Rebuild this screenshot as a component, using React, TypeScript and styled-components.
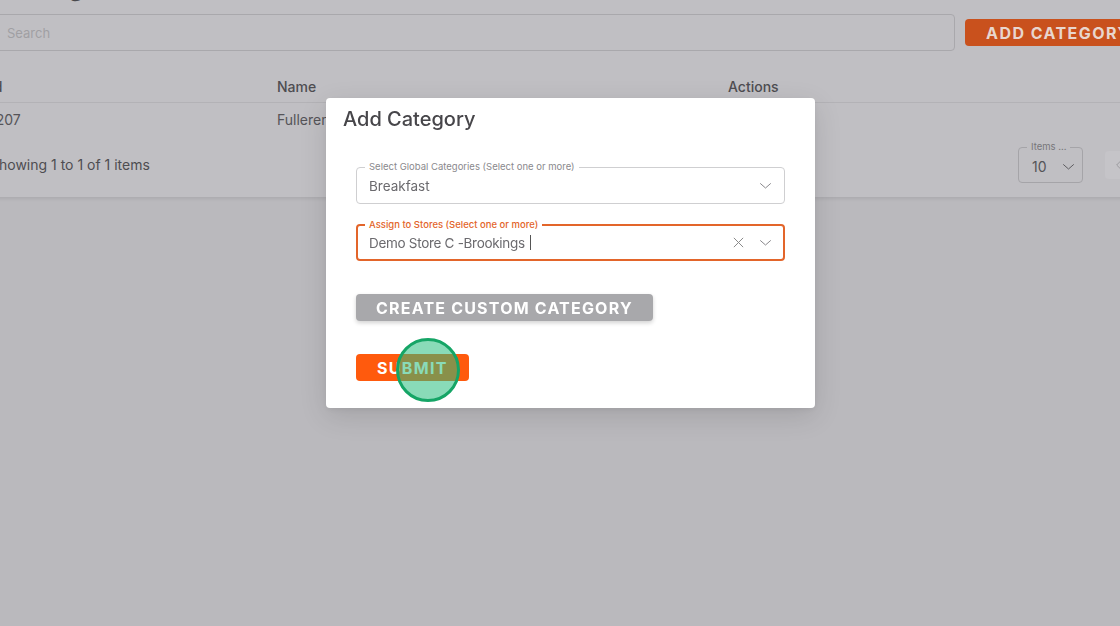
import styled, { createGlobalStyle } from "styled-components"

const GlobalStyle = createGlobalStyle`
  html, body {
    margin: 0;
    padding: 0;
    width: 1120px;
    height: 626px;
    overflow: hidden;
    background: #bab9bd;
    font-family: Inter, "Noto Sans", sans-serif;
  }
`

const Chevron = ({ color = "#8a898d", size = 15 }: { color?: string; size?: number }) => (
  <svg width={size} height={size} viewBox="0 0 24 24" fill="none" stroke={color} strokeWidth="1.6" strokeLinecap="round" strokeLinejoin="round">
    <path d="M4 9l8 7 8-7" />
  </svg>
)

const Cross = () => (
  <svg width="15" height="15" viewBox="0 0 24 24" fill="none" stroke="#8a8a8a" strokeWidth="1.6" strokeLinecap="round">
    <path d="M5 5l14 14M19 5L5 19" />
  </svg>
)

export default function App() {
  return (
    <>
      <GlobalStyle />
      <Page>
        <Paper>
          <Title>Categories</Title>
          <Toolbar>
            <Search placeholder="Search" />
            <OrangeButton $dim>ADD CATEGORY</OrangeButton>
          </Toolbar>
          <Table>
            <HeadCell>Id</HeadCell>
            <HeadCell>Name</HeadCell>
            <HeadCell>Actions</HeadCell>
            <Cell>1207</Cell>
            <Cell>Fullerenes</Cell>
            <Cell />
          </Table>
          <Footer>
            <span>Showing 1 to 1 of 1 items</span>
            <Pager>
              <ItemsSelect>
                <SmallLegend>Items ...</SmallLegend>
                <span>10</span>
                <Chevron color="#5e5d61" size={15} />
              </ItemsSelect>
              <PrevButton>
                <svg width="14" height="14" viewBox="0 0 24 24" fill="none" stroke="#99989c" strokeWidth="1.6" strokeLinecap="round">
                  <path d="M15 5l-7 7 7 7" />
                </svg>
              </PrevButton>
            </Pager>
          </Footer>
        </Paper>
      </Page>

      <Dialog>
        <DialogTitle>Add Category</DialogTitle>
        <Form>
          <Field>
            <Legend>Select Global Categories (Select one or more)</Legend>
            <Value>Breakfast</Value>
            <Icons>
              <Chevron />
            </Icons>
          </Field>
          <Field $focused>
            <Legend $focused>Assign to Stores (Select one or more)</Legend>
            <Value $tight>
              Demo Store C -Brookings <Caret />
            </Value>
            <Icons>
              <Cross />
              <Chevron />
            </Icons>
          </Field>
          <GreyButton>CREATE CUSTOM CATEGORY</GreyButton>
          <SubmitRow>
            <OrangeButton>SUBMIT</OrangeButton>
            <ClickMark />
          </SubmitRow>
        </Form>
      </Dialog>
    </>
  )
}

const Page = styled.div`
  margin: -46px 0 0 -34px;
  width: 1200px;
`

const Paper = styled.div`
  background: #c0bfc3;
  padding: 4px 24px 4px 24px;
  box-shadow: 0 2px 3px rgba(0, 0, 0, 0.08);
  color: #504f53;
`

const Title = styled.h1`
  margin: 0;
  height: 47px;
  padding: 9px 0 0 20px;
  font-size: 26px;
  font-weight: 500;
  line-height: 40px;
  color: #4a494d;
`

const Toolbar = styled.div`
  display: flex;
  align-items: center;
  gap: 10px;
`

const Search = styled.input`
  flex-shrink: 0;
  width: 965px;
  box-sizing: border-box;
  height: 37px;
  border: 1px solid #a9a8ac;
  border-radius: 4px;
  background: transparent;
  padding: 0 0 0 16px;
  font-family: inherit;
  font-size: 13px;
  outline: none;
  &::placeholder {
    color: #a09fa3;
  }
`

const OrangeButton = styled.button<{ $dim?: boolean }>`
  flex-shrink: 0;
  height: 27px;
  border: none;
  border-radius: 4px;
  padding: 0 21px;
  background: ${(p) => (p.$dim ? "#c9511d" : "#ff5a0d")};
  color: ${(p) => (p.$dim ? "#e8d6ce" : "#ffffff")};
  font-family: inherit;
  font-size: 16px;
  font-weight: 700;
  letter-spacing: ${(p) => (p.$dim ? "1.45px" : "1.3px")};
  white-space: nowrap;
  cursor: pointer;
`

const Table = styled.div`
  display: grid;
  grid-template-columns: 287px 451px 1fr;
  margin-top: 19px;
  font-size: 14px;
`

const HeadCell = styled.div`
  height: 33px;
  box-sizing: border-box;
  padding-top: 1px;
  display: flex;
  align-items: center;
  font-weight: 500;
  color: #4e4d51;
  border-bottom: 1px solid #b3b2b6;
`

const Cell = styled.div`
  height: 33px;
  display: flex;
  align-items: center;
  color: #555458;
`

const Footer = styled.div`
  display: flex;
  align-items: center;
  justify-content: space-between;
  font-size: 14px;
  color: #4e4d51;
  height: 57px;
`

const Pager = styled.div`
  display: flex;
  align-items: center;
  gap: 22px;
  margin-right: 9px;
`

const ItemsSelect = styled.div`
  position: relative;
  width: 65px;
  height: 36px;
  box-sizing: border-box;
  border: 1px solid #a5a4a8;
  border-radius: 4px;
  display: flex;
  align-items: center;
  gap: 14px;
  padding: 3px 0 0 13px;
  font-size: 14px;
  color: #555458;
`

const SmallLegend = styled.span`
  position: absolute;
  top: -7px;
  left: 8px;
  padding: 0 4px;
  background: #c0bfc3;
  font-size: 9.5px;
  line-height: 12px;
  color: #77767a;
`

const PrevButton = styled.div`
  width: 28px;
  height: 28px;
  border-radius: 4px;
  background: #c5c4c8;
  display: flex;
  align-items: center;
  justify-content: center;
`

const Dialog = styled.div`
  position: fixed;
  left: 326px;
  top: 98px;
  width: 489px;
  box-sizing: border-box;
  background: #ffffff;
  border-radius: 4px;
  box-shadow: 0 8px 28px rgba(0, 0, 0, 0.12), 0 2px 6px rgba(0, 0, 0, 0.06);
  padding: 9px 30px 27px 30px;
`

const DialogTitle = styled.h2`
  margin: 0 0 0 -13px;
  font-size: 20px;
  font-weight: 500;
  line-height: 24px;
  color: #47464a;
`

const Form = styled.div`
  display: flex;
  flex-direction: column;
  align-items: flex-start;
  padding-top: 36px;
`

const Field = styled.div<{ $focused?: boolean }>`
  position: relative;
  width: 429px;
  height: 37px;
  box-sizing: border-box;
  border: ${(p) => (p.$focused ? "2px solid #e3652a" : "1px solid #cfcfd1")};
  border-radius: 4px;
  display: flex;
  align-items: center;
  padding: 0 ${(p) => (p.$focused ? "10px" : "11px")} 0 ${(p) => (p.$focused ? "11px" : "12px")};
  margin-bottom: ${(p) => (p.$focused ? "33px" : "20px")};
`

const Legend = styled.span<{ $focused?: boolean }>`
  position: absolute;
  top: -7px;
  left: ${(p) => (p.$focused ? "7px" : "8px")};
  padding: 0 4px;
  background: #ffffff;
  font-size: 9.5px;
  line-height: 12px;
  font-weight: ${(p) => (p.$focused ? 500 : 400)};
  color: ${(p) => (p.$focused ? "#e3652a" : "#8a898d")};
  white-space: nowrap;
`

const Value = styled.div<{ $tight?: boolean }>`
  flex: 1;
  display: flex;
  align-items: center;
  font-size: 13.5px;
  letter-spacing: ${(p) => (p.$tight ? "-0.3px" : "0")};
  color: #6b6a6e;
  white-space: pre;
`

const Caret = styled.span`
  display: inline-block;
  width: 1px;
  height: 15px;
  margin-left: 2px;
  background: #555;
`

const Icons = styled.div`
  display: flex;
  align-items: center;
  gap: 12px;
`

const GreyButton = styled.button`
  height: 27px;
  border: none;
  border-radius: 4px;
  padding: 0 20px;
  background: #a8a8ab;
  color: #ffffff;
  font-family: inherit;
  font-size: 16px;
  font-weight: 700;
  letter-spacing: 1.2px;
  box-shadow: 0 2px 4px rgba(0, 0, 0, 0.18);
  margin-bottom: 33px;
`

const SubmitRow = styled.div`
  position: relative;
`

const ClickMark = styled.div`
  position: absolute;
  left: 40px;
  top: -16px;
  width: 64px;
  height: 64px;
  box-sizing: border-box;
  border-radius: 50%;
  border: 3px solid #15a566;
  background: rgba(40, 190, 125, 0.55);
  pointer-events: none;
`
